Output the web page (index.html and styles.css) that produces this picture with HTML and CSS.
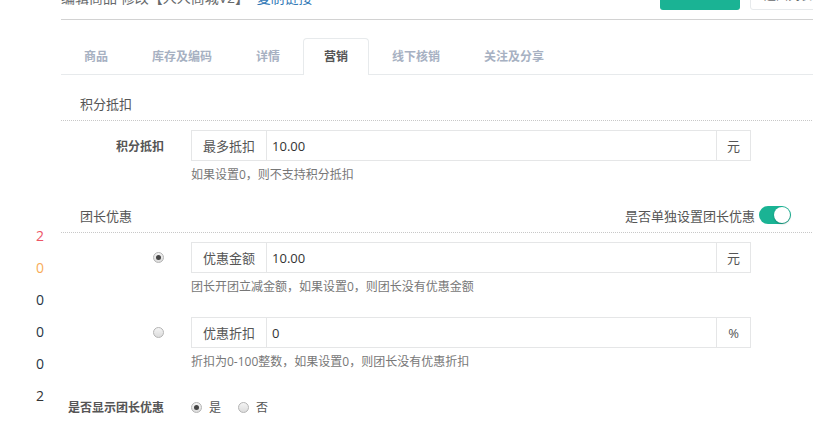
FILE: index.html
```html
<!DOCTYPE html>
<html lang="zh-CN">
<head>
  <meta charset="UTF-8" />
  <title>编辑商品</title>
  <link rel="stylesheet" href="styles.css">
</head>
<body>

  <div class="page">

    <!-- coluna lateral com contadores -->
    <div class="side">
      <div class="num red">2</div>
      <div class="num orange">0</div>
      <div class="num">0</div>
      <div class="num">0</div>
      <div class="num">0</div>
      <div class="num dark">2</div>
    </div>

    <div class="main">

      <div class="page-head">
        <div class="title">编辑商品 修改【人人商城V2】 <a href="#">复制链接</a></div>
        <div class="head-btns">
          <a class="btn btn-primary" href="#">添加新商品</a>
          <a class="btn btn-default" href="#">返回列表</a>
        </div>
      </div>

      <ul class="tabs">
        <li>商品</li>
        <li>库存及编码</li>
        <li>详情</li>
        <li class="active">营销</li>
        <li>线下核销</li>
        <li>关注及分享</li>
      </ul>

      <!-- 积分抵扣 -->
      <div class="sec"><span>积分抵扣</span></div>
      <div class="row">
        <label class="row-label">积分抵扣</label>
        <div class="field">
          <div class="group">
            <span class="addon">最多抵扣</span>
            <input type="text" value="10.00">
            <span class="addon addon-end">元</span>
          </div>
          <p class="help">如果设置0，则不支持积分抵扣</p>
        </div>
      </div>

      <!-- 团长优惠 -->
      <div class="sec">
        <span>团长优惠</span>
        <span class="sec-right">是否单独设置团长优惠 <span class="switch"></span></span>
      </div>
      <div class="row">
        <div class="row-label"><span class="radio checked"></span></div>
        <div class="field">
          <div class="group">
            <span class="addon">优惠金额</span>
            <input type="text" value="10.00">
            <span class="addon addon-end">元</span>
          </div>
          <p class="help">团长开团立减金额，如果设置0，则团长没有优惠金额</p>
        </div>
      </div>
      <div class="row row-next">
        <div class="row-label"><span class="radio"></span></div>
        <div class="field">
          <div class="group">
            <span class="addon">优惠折扣</span>
            <input type="text" value="0">
            <span class="addon addon-end">%</span>
          </div>
          <p class="help">折扣为0-100整数，如果设置0，则团长没有优惠折扣</p>
        </div>
      </div>
      <div class="row row-next row-inline">
        <label class="row-label">是否显示团长优惠</label>
        <div class="field choices">
          <span class="radio checked"></span><span class="choice">是</span>
          <span class="radio"></span><span class="choice">否</span>
        </div>
      </div>

    </div>
  </div>

</body>
</html>
```

FILE: styles.css
```css
body {
  margin: 0;
  overflow: hidden;
  font-family: "Open Sans", "Noto Sans CJK SC", sans-serif;
  font-size: 13px;
  color: #676a6c;
  background: #fff;
}

.page {
  display: flex;
  align-items: flex-start;
}

/* lateral */
.side {
  flex: 0 0 61px;
  box-sizing: border-box;
  padding-top: 220px;
  padding-right: 17px;
  text-align: right;
}
.num {
  line-height: 32px;
  font-size: 14px;
  color: #263545;
}
.num.red { color: #ed5565; }
.num.orange { color: #f8ac59; }
.num.dark { color: #333; }

.main {
  flex: 0 0 765px;
}

/* cabeçalho */
.page-head {
  display: flex;
  justify-content: space-between;
  align-items: flex-start;
  margin-top: -20px;
  height: 39px;
  border-bottom: 1px solid #d2d2d2;
}
.title {
  padding-top: 8px;
  line-height: 20px;
  font-size: 14px;
}
.title a {
  color: #337ab7;
  text-decoration: none;
  margin-left: 4px;
}
.head-btns {
  display: flex;
  gap: 10px;
}
.btn {
  display: block;
  height: 30px;
  line-height: 30px;
  box-sizing: border-box;
  border-radius: 3px;
  text-decoration: none;
  font-size: 12px;
}
.btn-primary {
  width: 80px;
  text-align: center;
  background: #1ab394;
  color: #fff;
}
.btn-default {
  width: 76px;
  text-align: center;
  border: 1px solid #e7eaec;
  color: #676a6c;
}

/* abas */
.tabs {
  display: flex;
  list-style: none;
  margin: 18px 0 0;
  padding: 0 0 0 2px;
  border-bottom: 1px solid #e7eaec;
}
.tabs li {
  height: 36px;
  line-height: 36px;
  box-sizing: border-box;
  padding: 0 20px;
  margin-right: 2px;
  font-size: 12px;
  font-weight: 600;
  color: #a7b1c2;
  border: 1px solid transparent;
  border-bottom: none;
  border-radius: 4px 4px 0 0;
}
.tabs li.active {
  height: 37px;
  margin-bottom: -1px;
  color: #555;
  background: #fff;
  border-color: #e7eaec;
}

/* seções */
.sec {
  display: flex;
  justify-content: space-between;
  align-items: center;
  margin-top: 11px;
  height: 34px;
  padding: 0 35px 0 19px;
  border-bottom: 1px dotted #c8c8c8;
  color: #555;
}
.sec-right {
  display: flex;
  align-items: center;
  gap: 4px;
}
.switch {
  position: relative;
  display: inline-block;
  width: 32px;
  height: 18px;
  border-radius: 9px;
  background: #1ab394;
}
.switch::after {
  content: "";
  position: absolute;
  top: 1px;
  right: 1px;
  width: 16px;
  height: 16px;
  border-radius: 50%;
  background: #fff;
  box-shadow: 0 1px 2px rgba(0,0,0,0.25);
}

/* linhas do formulário */
.row {
  display: grid;
  grid-template-columns: 103px 560px;
  column-gap: 27px;
  margin-top: 9px;
}
.row-next {
  margin-top: 18px;
}
.row-label {
  display: flex;
  justify-content: flex-end;
  align-items: center;
  height: 31px;
  font-size: 12px;
  font-weight: bold;
  color: #555;
}
.row-inline .row-label {
  height: 30px;
}

.group {
  display: flex;
  height: 31px;
  box-sizing: border-box;
  border: 1px solid #e5e6e7;
}
.addon {
  display: flex;
  align-items: center;
  padding: 0 11px;
  border-right: 1px solid #e5e6e7;
  color: #555;
}
.addon-end {
  width: 34px;
  box-sizing: border-box;
  justify-content: center;
  padding: 0;
  border-right: none;
  border-left: 1px solid #e5e6e7;
}
.group input {
  flex: 1;
  min-width: 0;
  border: none;
  outline: none;
  padding: 0 0 0 5px;
  font-family: inherit;
  font-size: 13px;
  color: #333;
  background: transparent;
}
.help {
  margin: 5px 0 3px;
  line-height: 18px;
  font-size: 12px;
  color: #777;
}

/* rádios */
.radio {
  display: inline-block;
  position: relative;
  width: 11px;
  height: 11px;
  box-sizing: border-box;
  border-radius: 50%;
  border: 1px solid #b4b4b4;
  background: linear-gradient(#f4f4f4, #dcdcdc);
}
.radio.checked::after {
  content: "";
  position: absolute;
  top: 2px;
  left: 2px;
  width: 5px;
  height: 5px;
  border-radius: 50%;
  background: #444;
}
.choices {
  display: flex;
  align-items: center;
  height: 30px;
}
.choice {
  margin: 0 17px 0 7px;
  font-size: 12px;
  color: #555;
}
```
